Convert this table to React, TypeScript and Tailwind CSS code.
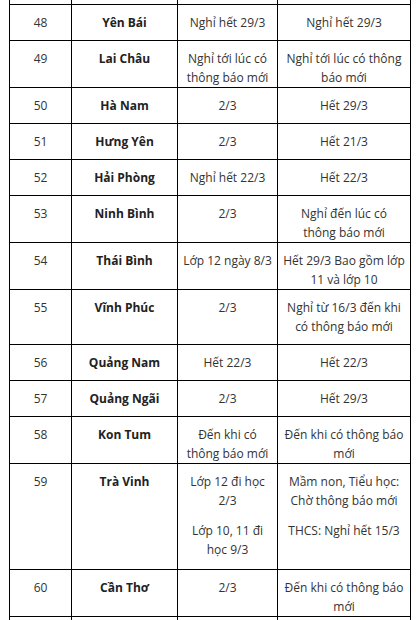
import React from 'react';

type Row = {
  no: number;
  name: string;
  a: string[][];
  b: string[][];
  h: string;
};

// each cell: list of paragraphs, each paragraph: list of lines
const rows: Row[] = [
  { no: 48, name: 'Yên Bái', a: [['Nghỉ hết 29/3']], b: [['Nghỉ hết 29/3']], h: 'h-[36px]' },
  { no: 49, name: 'Lai Châu', a: [['Nghỉ tới lúc có', 'thông báo mới']], b: [['Nghỉ tới lúc có thông', 'báo mới']], h: 'h-[47px]' },
  { no: 50, name: 'Hà Nam', a: [['2/3']], b: [['Hết 29/3']], h: 'h-[36px]' },
  { no: 51, name: 'Hưng Yên', a: [['2/3']], b: [['Hết 21/3']], h: 'h-[36px]' },
  { no: 52, name: 'Hải Phòng', a: [['Nghỉ hết 22/3']], b: [['Hết 22/3']], h: 'h-[36px]' },
  { no: 53, name: 'Ninh Bình', a: [['2/3']], b: [['Nghỉ đến lúc có', 'thông báo mới']], h: 'h-[47px]' },
  { no: 54, name: 'Thái Bình', a: [['Lớp 12 ngày 8/3']], b: [['Hết 29/3 Bao gồm lớp', '11 và lớp 10']], h: 'h-[47px]' },
  { no: 55, name: 'Vĩnh Phúc', a: [['2/3']], b: [['Nghỉ từ 16/3 đến khi', 'có thông báo mới']], h: 'h-[55px]' },
  { no: 56, name: 'Quảng Nam', a: [['Hết 22/3']], b: [['Hết 22/3']], h: 'h-[36px]' },
  { no: 57, name: 'Quảng Ngãi', a: [['2/3']], b: [['Hết 29/3']], h: 'h-[36px]' },
  { no: 58, name: 'Kon Tum', a: [['Đến khi có', 'thông báo mới']], b: [['Đến khi có thông báo', 'mới']], h: 'h-[46px]' },
  {
    no: 59,
    name: 'Trà Vinh',
    a: [['Lớp 12 đi học', '2/3'], ['Lớp 10, 11 đi', 'học 9/3']],
    b: [['Mầm non, Tiểu học:', 'Chờ thông báo mới'], ['THCS: Nghỉ hết 15/3']],
    h: 'h-[106px]',
  },
  { no: 60, name: 'Cần Thơ', a: [['2/3']], b: [['Đến khi có thông báo', 'mới']], h: 'h-[47px]' },
];

const cell = 'border border-black align-top text-center pt-[8px] px-[4px] p-0';

function Paras({ paras }: { paras: string[][] }) {
  return (
    <>
      {paras.map((lines, i) => (
        <p key={i} className={i > 0 ? 'mt-[11px]' : ''}>
          {lines.map((l, j) => (
            <span key={j} className="block whitespace-nowrap">
              {l}
            </span>
          ))}
        </p>
      ))}
    </>
  );
}

export default function App() {
  return (
    <div className="h-[620px] w-[416px] overflow-hidden bg-white">
      <div className="pl-[9px]">
        <table
          className="table-fixed border-collapse w-[401px] text-[12px] leading-[19px] text-[#333]"
          style={{ fontFamily: '"Open Sans", "Noto Sans", sans-serif' }}
        >
          <colgroup>
            <col className="w-[62px]" />
            <col className="w-[106px]" />
            <col className="w-[100px]" />
            <col className="w-[133px]" />
          </colgroup>
          <tbody>
            <tr className="h-[4px]">
              <td className="border-x border-b border-black p-0" />
              <td className="border-x border-b border-black p-0" />
              <td className="border-x border-b border-black p-0" />
              <td className="border-x border-b border-black p-0" />
            </tr>
            {rows.map((r) => (
              <tr key={r.no} className={r.h}>
                <td className={cell}>{r.no}</td>
                <td className={cell + ' font-bold text-[#222]'}>{r.name}</td>
                <td className={cell}>
                  <Paras paras={r.a} />
                </td>
                <td className={cell}>
                  <Paras paras={r.b} />
                </td>
              </tr>
            ))}
            {/* next row, cut by the bottom edge */}
            <tr className="h-[36px]">
              <td className="border border-black p-0" />
              <td className="border border-black p-0" />
              <td className="border border-black p-0" />
              <td className="border border-black p-0" />
            </tr>
          </tbody>
        </table>
      </div>
    </div>
  );
}
